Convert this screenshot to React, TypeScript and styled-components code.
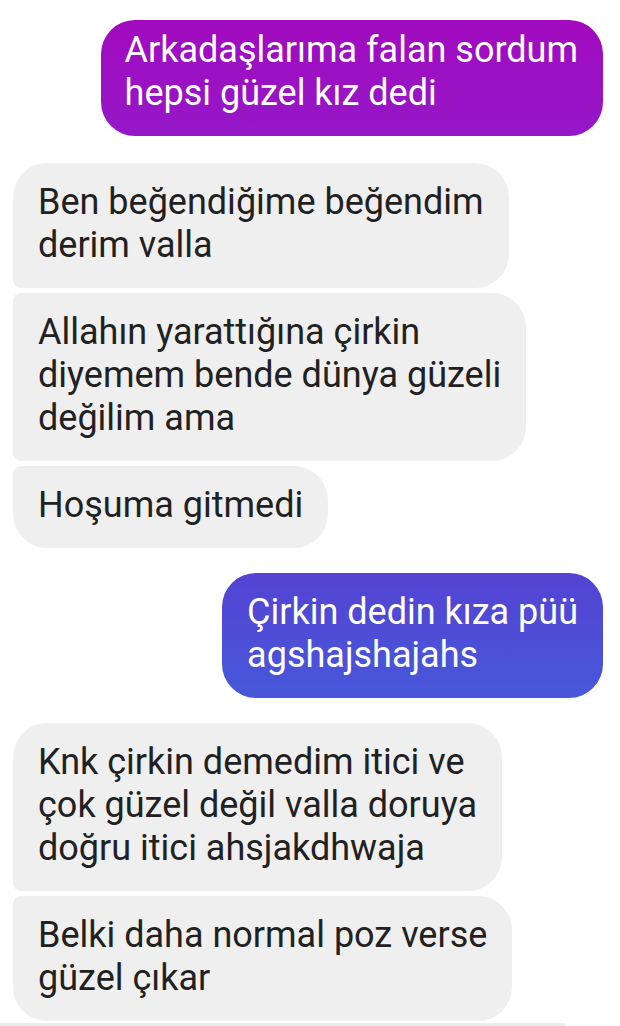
import React from "react";
import styled, { createGlobalStyle, css } from "styled-components";

const Global = createGlobalStyle`
  html, body { margin: 0; padding: 0; background: #ffffff; }
  body { width: 620px; height: 1026px; overflow: hidden; }
`;

const Thread = styled.div`
  display: flex;
  flex-direction: column;
  padding: 20px 17px 0 13px;
  height: 1026px;
  box-sizing: border-box;
  font-family: Roboto, "Noto Sans", sans-serif;
  font-size: 36px;
  line-height: 43px;
  position: relative;
`;

const Group = styled.div<{ $mine?: boolean; $gap: number }>`
  display: flex;
  flex-direction: column;
  align-items: ${(p) => (p.$mine ? "flex-end" : "flex-start")};
  gap: 5px;
  margin-top: ${(p) => p.$gap}px;
`;

type Pos = "single" | "first" | "middle" | "last";

const BIG = 34;
const SMALL = 8;

const radius = (mine: boolean, pos: Pos) => {
  const topInner = pos === "single" || pos === "first" ? BIG : SMALL;
  const bottomInner = pos === "single" || pos === "last" ? BIG : SMALL;
  return mine
    ? `${BIG}px ${topInner}px ${bottomInner}px ${BIG}px`
    : `${topInner}px ${BIG}px ${BIG}px ${bottomInner}px`;
};

const Bubble = styled.div<{ $tone: "gray" | "purple" | "blue"; $mine?: boolean; $pos: Pos; $topPad?: number }>`
  box-sizing: border-box;
  white-space: nowrap;
  padding: ${(p) => p.$topPad ?? 18}px 25px 21px 25px;
  border-radius: ${(p) => radius(!!p.$mine, p.$pos)};
  ${(p) =>
    p.$tone === "gray"
      ? css`
          background: #efefef;
          color: #212121;
        `
      : p.$tone === "purple"
      ? css`
          background: linear-gradient(180deg, #a20abf 0%, #9418c8 100%);
          color: #ffffff;
          padding-left: 24px;
        `
      : css`
          background: linear-gradient(180deg, #5443d3 0%, #4758da 100%);
          color: #ffffff;
        `}
`;

const Composer = styled.div`
  position: absolute;
  left: 0;
  bottom: 0;
  width: 565px;
  height: 3px;
  background: #ececec;
`;

type Msg = { lines: string[] };
type G = { mine?: boolean; tone: "gray" | "purple" | "blue"; gap: number; topPad?: number; msgs: Msg[] };

const groups: G[] = [
  {
    mine: true,
    tone: "purple",
    gap: 0,
    topPad: 9,
    msgs: [{ lines: ["Arkadaşlarıma falan sordum", "hepsi güzel kız dedi"] }],
  },
  {
    tone: "gray",
    gap: 27,
    msgs: [
      { lines: ["Ben beğendiğime beğendim", "derim valla"] },
      { lines: ["Allahın yarattığına çirkin", "diyemem bende dünya güzeli", "değilim ama"] },
      { lines: ["Hoşuma gitmedi"] },
    ],
  },
  {
    mine: true,
    tone: "blue",
    gap: 25,
    msgs: [{ lines: ["Çirkin dedin kıza püü", "agshajshajahs"] }],
  },
  {
    tone: "gray",
    gap: 25,
    msgs: [
      { lines: ["Knk çirkin demedim itici ve", "çok güzel değil valla doruya", "doğru itici ahsjakdhwaja"] },
      { lines: ["Belki daha normal poz verse", "güzel çıkar"] },
    ],
  },
];

const posOf = (i: number, n: number): Pos =>
  n === 1 ? "single" : i === 0 ? "first" : i === n - 1 ? "last" : "middle";

export default function App() {
  return (
    <>
      <Global />
      <Thread>
        {groups.map((g, gi) => (
          <Group key={gi} $mine={g.mine} $gap={g.gap}>
            {g.msgs.map((m, mi) => (
              <Bubble
                key={mi}
                $tone={g.tone}
                $mine={g.mine}
                $pos={posOf(mi, g.msgs.length)}
                $topPad={g.topPad}
              >
                {m.lines.map((l, li) => (
                  <React.Fragment key={li}>
                    {li > 0 && <br />}
                    {l}
                  </React.Fragment>
                ))}
              </Bubble>
            ))}
          </Group>
        ))}
        <Composer />
      </Thread>
    </>
  );
}
